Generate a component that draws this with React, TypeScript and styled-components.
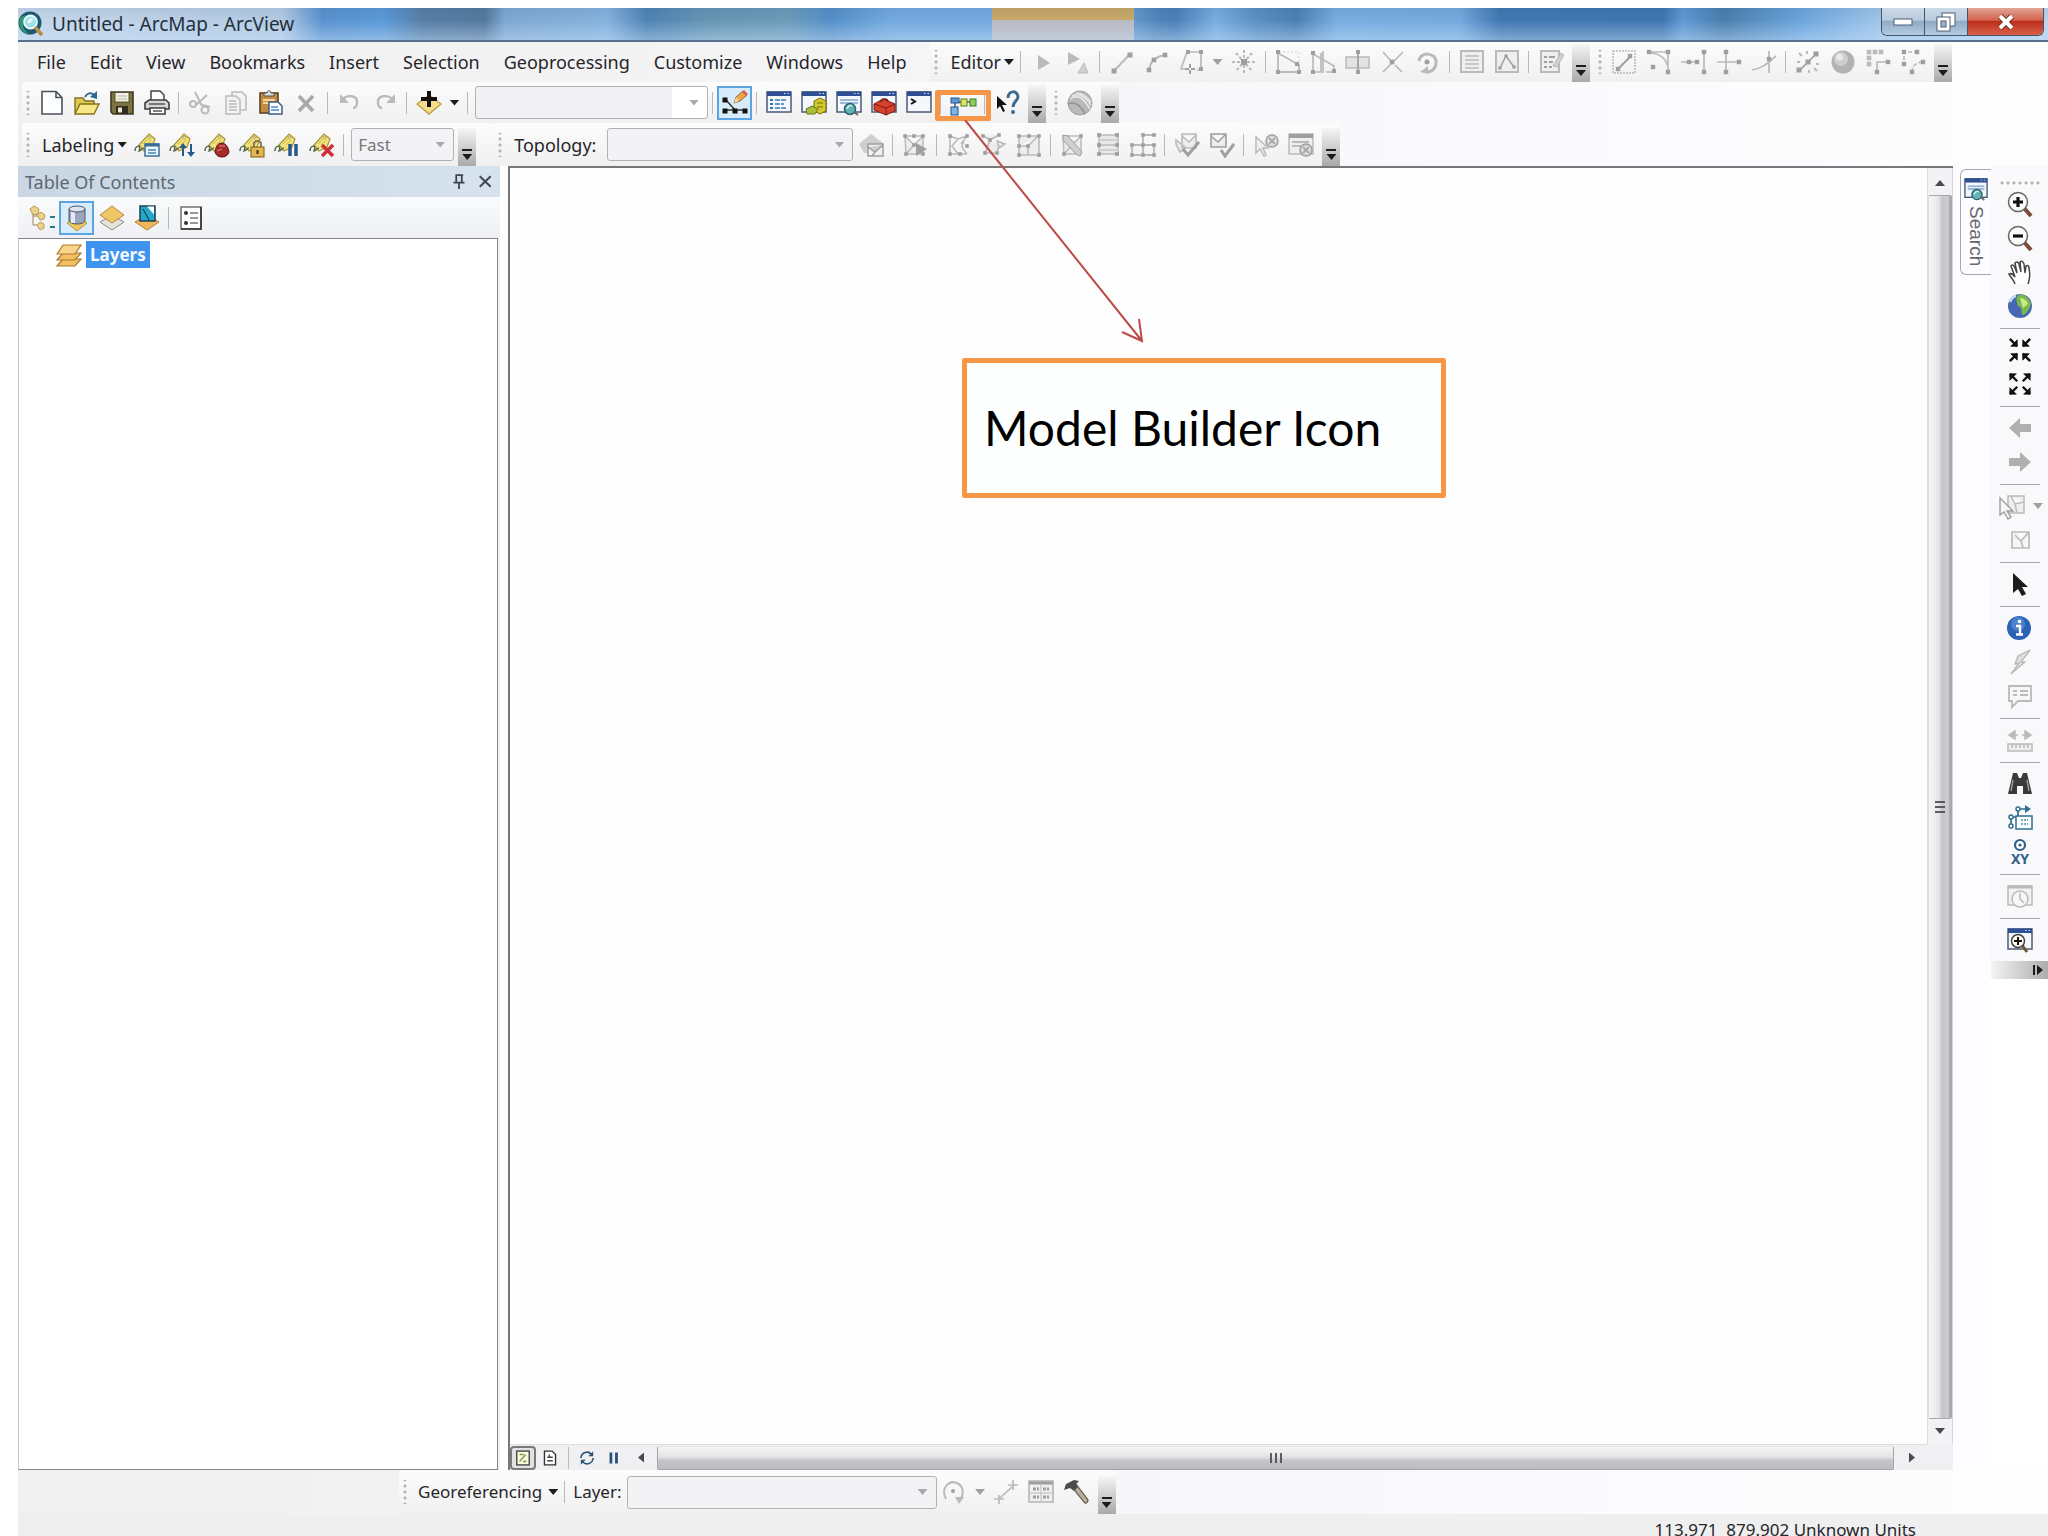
import React from 'react';
import styled, { createGlobalStyle, css } from 'styled-components';

const GlobalStyle = createGlobalStyle`
  *, *::before, *::after { box-sizing: border-box; }
  html, body { margin: 0; padding: 0; background: #ffffff; }
  body, button, select, input { font-family: 'Noto Sans', 'Open Sans', sans-serif; }
`;

/* ---------- icon drawings, all on a 26 x 26 grid ---------- */

const G = '#bababa';
const D = '#9f9f9f';

const dots = (pts: number[][], fill = D, r = 2) =>
  pts.map(([x, y], i) => <rect key={i} x={x - r} y={y - r} width={r * 2} height={r * 2} fill={fill} />);

const windowFrame = (
  <>
    <rect x="1" y="2" width="24" height="20" fill="#f4f8fc" stroke="#4a5a74" strokeWidth="1.5" />
    <rect x="1" y="1.5" width="24" height="4.5" fill="#2f4f94" />
    <path d="M18 3.5h1.5M21.500 3.500h1.500" stroke="#cfe0ff" />
  </>
);

const labelTag = (
  <>
    <path d="M5 13 15 2l6 5-3 8-8 4z" fill="#f1e27c" stroke="#a8973a" strokeWidth="1.2" />
    <circle cx="15.500" cy="5.500" r="1.200" fill="#fff" stroke="#8a7a2c" strokeWidth=".7" />
    <path d="M1 19c0-3 2-5 4-5 1 0 1 3 0 5 2 0 3-3 5-3" fill="none" stroke="#5b6b4a" strokeWidth="1.600" />
    <path d="M9 12l6-6M12 13l5-5" stroke="#cbb84c" />
  </>
);

const polyMesh = <path d="M3 4h18v18H4zM3 4l9 9 9-9M12 13l-8 9" fill="#ededed" stroke={G} strokeWidth="1.500" />;
const meshDots = dots([[3, 4], [12, 4], [21, 4], [4, 22], [21, 22], [12, 13]], D, 1.800);

const arrowHead = (x: number, y: number, dx: number, dy: number) => (
  <g key={`${x}-${y}`} fill="#111" stroke="#111">
    <path d={`M${x} ${y}v${dy * 7}l${dx * 7} ${-dy * 7}z`} strokeWidth=".8" />
    <path d={`M${x} ${y}l${dx * 8} ${dy * 8}`} strokeWidth="2.600" />
  </g>
);

const icons: Record<string, React.ReactNode> = {
  app: (
    <>
      <circle cx="12" cy="12" r="11.500" fill="#1d5a72" />
      <path d="M3 6a12 12 0 0 0 0 12 11 11 0 0 0 8 5C4 18 3 12 8 4z" fill="#2f9a6c" />
      <circle cx="12.500" cy="11" r="6.500" fill="#9fe0ee" stroke="#eafcff" strokeWidth="1.800" />
      <path d="M9 12c1-4 3-5 6-5-1 4-2 6-6 5z" fill="#fff" opacity=".7" />
      <path d="M17 16l7 8" stroke="#b98a4c" strokeWidth="3.500" />
    </>
  ),
  newDoc: <path d="M3 1.500h14l6 6V24H3zM17 1.500v6h6" fill="#fbfdff" stroke="#4b525c" strokeWidth="1.600" />,
  open: (
    <>
      <path d="M1 23V8h8l2 3h9v4" fill="#e2c84f" stroke="#84711d" strokeWidth="1.400" />
      <path d="M1 24l5-10h19l-5 10z" fill="#f8e887" stroke="#84711d" strokeWidth="1.400" />
      <path d="M11 7c2-4 6-5 9-2" fill="none" stroke="#2b6a8e" strokeWidth="2" />
      <path d="M23 1v8l-7-2z" fill="#2b6a8e" />
    </>
  ),
  save: (
    <>
      <path d="M2 2h22v22H4l-2-2z" fill="#7d7240" stroke="#3d3a24" strokeWidth="1.600" />
      <rect x="6" y="2.500" width="14" height="9.500" fill="#f4f3ea" stroke="#55502d" />
      <path d="M8 6h10M8 9h10" stroke="#b9b59a" />
      <rect x="7" y="16" width="12" height="8" fill="#2f2d22" />
      <rect x="9" y="17.500" width="4" height="5" fill="#e9e7dc" />
    </>
  ),
  print: (
    <>
      <path d="M7 11V1h9l4 4v6" fill="#fff" stroke="#444" strokeWidth="1.500" />
      <path d="M1 19v-6l4-3h17l3 3v6z" fill="#d6d6d6" stroke="#3d3d3d" strokeWidth="1.600" />
      <path d="M5 14h16" stroke="#555" strokeWidth="1.500" />
      <path d="M6 18h15v6H6z" fill="#fff" stroke="#3d3d3d" strokeWidth="1.500" />
      <path d="M9 21h9" stroke="#555" strokeWidth="1.500" />
    </>
  ),
  cut: (
    <g fill="none" stroke={G} strokeWidth="2">
      <path d="M7 2l7 14M19 5 8 15" />
      <circle cx="17" cy="20" r="3.500" />
      <circle cx="5" cy="14" r="3" />
      <path d="M14 15l8 2" />
    </g>
  ),
  copy: (
    <g fill="#f3f3f3" stroke={G} strokeWidth="1.500">
      <path d="M9 2h10l4 4v14H9z" />
      <path d="M3 6h10l4 4v14H3z" />
      <path d="M6 11h7M6 14h8M6 17h8M6 20h8" />
    </g>
  ),
  paste: (
    <>
      <rect x="2" y="3" width="18" height="20" fill="#c58a42" stroke="#5c4424" strokeWidth="1.600" />
      <path d="M6 6V3h3c0-3 4-3 4 0h3v3z" fill="#dcdcdc" stroke="#555" />
      <path d="M5 10h12M5 13h8" stroke="#f5d49a" strokeWidth="2" />
      <path d="M11 12h9l4 4v8H11z" fill="#fff" stroke="#3b5d86" strokeWidth="1.500" />
      <path d="M13 17h7M13 20h8" stroke="#4a86c5" strokeWidth="1.500" />
    </>
  ),
  del: <path d="M6 6l14 15M20 6 6 21" stroke="#a9a9a9" strokeWidth="3.600" />,
  undo: (
    <g fill="none" stroke={G} strokeWidth="2.400">
      <path d="M5 10c5-6 16-5 15 3 0 3-2 5-4 5" />
      <path d="M3 4v9h9z" fill={G} stroke="none" />
    </g>
  ),
  redo: (
    <g fill="none" stroke={G} strokeWidth="2.400">
      <path d="M21 10C16 4 5 5 6 13c0 3 2 5 4 5" />
      <path d="M23 4v9h-9z" fill={G} stroke="none" />
    </g>
  ),
  add: (
    <>
      <path d="M1 14 13 5l12 9-12 10z" fill="#f4dc8a" stroke="#c2a04c" strokeWidth="1.400" />
      <path d="M13 1v16M5 9h16" stroke="#111" strokeWidth="4" />
    </>
  ),
  sketch: (
    <>
      <path d="M4 10l9 10 9 0M4 20h9" stroke="#333" strokeWidth="1.500" fill="none" />
      {dots([[3, 10], [3, 21], [13, 21], [23, 21]], '#111', 2.500)}
      <path d="M12 13l2-6 7-6 4 4-7 6z" fill="#eca64c" stroke="#8a6a3a" />
      <path d="M12 13l2-6 3 4z" fill="#f4dcb4" />
      <path d="M20 2l2-2 4 4-2 2z" fill="#d2605c" />
    </>
  ),
  winTable: (
    <>
      {windowFrame}
      <path d="M4 10h3M4 14h3M4 18h3" stroke="#2f7ab0" strokeWidth="2" />
      <path d="M9 10h12M9 14h9M9 18h12" stroke="#3d78a8" strokeWidth="1.600" strokeDasharray="5 1" />
    </>
  ),
  winCatalog: (
    <>
      {windowFrame}
      <path d="M13 11l6-3 6 3v10l-6 3-6-3z" fill="#d3c82c" stroke="#756e10" />
      <path d="M5 19l6-3 6 3-3 5H6z" fill="#a8c03a" stroke="#66761c" />
      <path d="M16 13l6 0M16 17h6" stroke="#756e10" />
    </>
  ),
  winSearch: (
    <>
      {windowFrame}
      <path d="M4 10h18M4 13h18" stroke="#9db8d8" strokeWidth="2" />
      <circle cx="14" cy="19" r="5.500" fill="#63b4b4" stroke="#2d6474" strokeWidth="1.500" />
      <path d="M11 19c1-3 3-4 5-3" stroke="#c9f2e8" strokeWidth="1.500" fill="none" />
      <path d="M18 22l4 3" stroke="#6b6b6b" strokeWidth="2" />
    </>
  ),
  winToolbox: (
    <>
      {windowFrame}
      <path d="M3 14l9-5 12 5v7l-9 4-12-5z" fill="#d5402f" stroke="#7c1c14" />
      <path d="M3 14l12 4 9-4M15 18v7" stroke="#7c1c14" fill="none" />
      <path d="M10 12c0-4 7-4 7 0" stroke="#7c1c14" strokeWidth="1.500" fill="none" />
    </>
  ),
  winPython: (
    <>
      {windowFrame}
      <path d="M5 9l4 2.500-4 2.500" stroke="#111" strokeWidth="2" fill="none" />
    </>
  ),
  model: (
    <>
      <path d="M5 11v7M7 12h17" stroke="#556" strokeWidth="1.500" fill="none" />
      <rect x="1" y="8" width="8" height="5" fill="#5d9bd8" stroke="#24558c" />
      <rect x="1" y="17" width="7" height="8" fill="#7db5e6" stroke="#24558c" />
      <rect x="11" y="9" width="6" height="7" fill="#e2e65c" stroke="#5a7a20" />
      <rect x="20" y="9" width="6" height="7" fill="#8ccf58" stroke="#3e7a20" />
    </>
  ),
  help: (
    <>
      <path d="M3 6v13l3-3 3 6 2-1-3-6h5z" fill="#111" />
      <path d="M14 8c0-8 10-8 10-1 0 4-5 4-5 10" fill="none" stroke="#3c6a8e" strokeWidth="3" />
      <circle cx="19" cy="22" r="2" fill="#3c6a8e" />
    </>
  ),
  globeGray: (
    <>
      <circle cx="13" cy="13" r="12" fill="#b9b9b9" stroke="#a2a2a2" />
      <path d="M3 9c8-6 14 0 20 10M5 6c8-4 14 2 19 9M9 3c6 0 11 4 15 9" stroke="#e9e9e9" strokeWidth="1.500" fill="none" />
      <path d="M1 14c7-3 13 2 17 10" stroke="#8f8f8f" strokeWidth="1.500" fill="none" />
    </>
  ),
  play: <path d="M8 6l12 8-12 7z" fill={G} />,
  playA: (
    <>
      <path d="M3 3l12 7-12 6z" fill={G} />
      <path d="M13 24l6-10 4 10z" fill="#cfcfcf" stroke={G} />
    </>
  ),
  line: (
    <>
      <path d="M5 22 21 5" stroke={G} strokeWidth="2" />
      {dots([[5, 22], [21, 6]], D, 2.500)}
    </>
  ),
  arc: (
    <>
      <path d="M5 22C6 12 11 8 21 6" stroke={G} strokeWidth="2" fill="none" />
      {dots([[5, 21], [10, 11], [21, 6]], D, 2.300)}
    </>
  ),
  trace: (
    <>
      <path d="M8 20H2L8 3h14v18h-4" stroke={G} strokeWidth="1.700" fill="none" />
      <path d="M11 15v10M6 20h10" stroke={D} strokeWidth="2" strokeDasharray="4 2" />
      {dots([[9, 3], [22, 3], [22, 20]], D, 2)}
    </>
  ),
  spark: (
    <g stroke={G} strokeWidth="2" strokeDasharray="3 2">
      <path d="M13 1v24M1 13h24M5 4l16 18M21 4 5 22" />
      <rect x="10" y="10" width="6" height="6" fill={D} stroke="none" />
    </g>
  ),
  ed1: (
    <>
      <path d="M3 3v20h21v-7L3 4" stroke={G} strokeWidth="1.800" fill="none" />
      <path d="M4 3h20v12" stroke="#cdcdcd" strokeDasharray="2 2" fill="none" />
      {dots([[3, 3], [3, 23], [24, 23], [22, 15]], D, 2)}
    </>
  ),
  ed2: (
    <>
      <path d="M3 4v19h8V4M13 2v22M3 5l9 5 12 7v6h-8" stroke={G} strokeWidth="1.700" fill="none" />
      {dots([[3, 4], [3, 23], [24, 22]], D, 2)}
    </>
  ),
  ed3: (
    <>
      <rect x="1" y="8" width="23" height="11" fill="#e3e3e3" stroke={G} strokeWidth="1.500" />
      <path d="M13 2v23" stroke={D} strokeWidth="1.700" />
      {dots([[13, 3], [13, 23]], D, 2)}
    </>
  ),
  ed4: (
    <>
      <path d="M3 23 23 3M3 3l9 10M15 16l7 7" stroke={G} strokeWidth="1.700" />
      {dots([[12, 13]], D, 2.300)}
    </>
  ),
  ed5: (
    <>
      <path d="M4 12C5 2 22 3 21 14c0 6-5 9-9 9" stroke={G} strokeWidth="3" fill="none" />
      <path d="M5 23l8-6v8z" fill={G} />
      <circle cx="12" cy="13" r="2.500" fill={D} />
    </>
  ),
  sheet: (
    <>
      <rect x="2" y="2" width="22" height="21" fill="#efefef" stroke={G} strokeWidth="2" />
      <path d="M6 7h14M6 11h14M6 15h14M6 19h14" stroke={G} strokeWidth="1.400" />
    </>
  ),
  chart: (
    <>
      <rect x="2" y="2" width="22" height="21" fill="#efefef" stroke={G} strokeWidth="2" />
      <path d="M6 19 12 7l8 11" stroke={D} strokeWidth="1.500" fill="none" />
      {dots([[6, 19], [12, 7], [20, 18]], D, 1.600)}
    </>
  ),
  form: (
    <>
      <path d="M3 2h18v21H3z" fill="#efefef" stroke={G} strokeWidth="2" />
      <path d="M6 8h3M6 13h3M6 18h3M11 8h6M11 13h4M11 18h3" stroke={D} strokeWidth="2" />
      <path d="M15 17l8-13 3 2-7 12z" fill="#d0d0d0" stroke={G} />
    </>
  ),
  sn1: (
    <>
      <rect x="2" y="2" width="22" height="22" fill="none" stroke={G} strokeWidth="1.500" strokeDasharray="2 1" />
      <path d="M7 20 20 7" stroke={D} strokeWidth="2" />
      {dots([[7, 20], [19, 7]], D, 2.200)}
    </>
  ),
  sn2: (
    <>
      <path d="M3 3h19v20M4 4c8 0 16 5 17 12" stroke={G} strokeWidth="1.700" fill="none" />
      {dots([[3, 3], [22, 3], [22, 23], [7, 18]], D, 2.200)}
    </>
  ),
  sn3: (
    <>
      <path d="M23 3v20M0 13h18" stroke={G} strokeWidth="1.700" />
      {dots([[23, 3], [23, 23], [8, 13], [16, 13]], D, 2.200)}
    </>
  ),
  sn4: (
    <>
      <path d="M10 3v20M1 13h23" stroke={G} strokeWidth="1.700" />
      {dots([[10, 3], [10, 23], [23, 13]], D, 2.200)}
    </>
  ),
  sn5: (
    <>
      <path d="M1 21C10 20 16 15 25 7M18 2v22" stroke={G} strokeWidth="1.700" fill="none" />
      {dots([[18, 10]], D, 2.200)}
    </>
  ),
  sn6: (
    <>
      <path d="M4 22 22 4" stroke={D} strokeWidth="1.700" />
      <path d="M2 13h3M21 15h3M12 2v3M14 21v3M4 4l3 3M19 19l3 3" stroke={G} strokeWidth="2" />
      {dots([[4, 21], [13, 13], [21, 5]], D, 2.500)}
    </>
  ),
  sphere: (
    <>
      <circle cx="13" cy="13" r="11.500" fill="#b2b2b2" />
      <circle cx="11" cy="10" r="7" fill="#cdcdcd" />
      <circle cx="9.500" cy="8" r="3.500" fill="#e9e9e9" />
    </>
  ),
  sn7: (
    <>
      {dots([[4, 3], [10, 3], [16, 3], [4, 9], [4, 15]], G, 2.300)}
      <path d="M12 23V13h12" stroke={G} strokeWidth="1.700" fill="none" />
      {dots([[12, 23], [23, 13]], D, 2.200)}
    </>
  ),
  sn8: (
    <>
      <path d="M4 17V3h14M12 23c0-7 5-10 12-10" stroke={G} strokeWidth="1.700" strokeDasharray="4 2" fill="none" />
      {dots([[4, 3], [17, 3], [4, 15], [12, 23], [23, 13]], D, 2.200)}
    </>
  ),
  lab1: (
    <>
      {labelTag}
      <rect x="11" y="12" width="14" height="12" fill="#eef6fc" stroke="#3b6c98" strokeWidth="1.500" />
      <path d="M11 13h14" stroke="#3b6c98" strokeWidth="3" />
      <path d="M14 18h8M14 21h8" stroke="#3b8ac0" strokeWidth="1.500" />
    </>
  ),
  lab2: (
    <>
      {labelTag}
      <path d="M14 24V13M22 12v11" stroke="#27598a" strokeWidth="2" />
      <path d="M10 16l4-5 4 5zM18 20l4 5 4-5z" fill="#27598a" />
    </>
  ),
  lab3: (
    <>
      {labelTag}
      <path d="M11 20c1-7 4-9 7-9s6 3 7 9c-1 3-3 5-7 5s-6-2-7-5z" fill="#a52b2b" stroke="#5e1212" />
      <path d="M15 14h6M13 19l5-2" stroke="#e08a8a" />
    </>
  ),
  lab4: (
    <>
      {labelTag}
      <path d="M15 16v-4c0-4 7-4 7 0v4" fill="none" stroke="#8a7a54" strokeWidth="2" />
      <rect x="12" y="15" width="13" height="10" fill="#e0b750" stroke="#7a5c1c" />
      <path d="M18.500 18v4" stroke="#443310" strokeWidth="2" />
    </>
  ),
  lab5: (
    <>
      {labelTag}
      <path d="M16 12v12M22 12v12" stroke="#27598a" strokeWidth="3.500" />
    </>
  ),
  lab6: (
    <>
      {labelTag}
      <path d="M13 13l11 11M24 13 13 24" stroke="#cf2f38" strokeWidth="3.500" />
    </>
  ),
  tp1: (
    <>
      <path d="M1 12 13 2l12 9-3 10H6z" fill="#cfcfcf" />
      <path d="M10 12h15v12H10zM10 15l7 5 8-7M14 24l3-4" fill="#f2f2f2" stroke={D} strokeWidth="1.500" />
    </>
  ),
  tp2: (
    <>
      {polyMesh}
      {meshDots}
      <path d="M14 11l11 6-11 7z" fill={D} />
    </>
  ),
  tp3: (
    <>
      <path d="M4 4v18h17M4 4l8 3 9-3M12 7l-6 7 6 8M15 12l6-8M18 10c-4 4-1 7 3 12" fill="none" stroke={G} strokeWidth="1.600" />
      {dots([[4, 4], [21, 4], [4, 22], [14, 22], [21, 14]], D, 1.800)}
    </>
  ),
  tp4: (
    <>
      <path d="M2 4l7 4 9-5M9 8 4 21h12l2-8M16 9l8 3-6 4z" fill="#ececec" stroke={G} strokeWidth="1.600" />
      {dots([[2, 4], [18, 3], [4, 21], [16, 21], [9, 8]], D, 1.800)}
    </>
  ),
  tp5: (
    <>
      <path d="M3 4h20v19H3zM3 14h9l9-9M12 14v9" fill="#ededed" stroke={G} strokeWidth="1.600" />
      {dots([[3, 4], [13, 4], [23, 4], [3, 23], [23, 23], [12, 14], [3, 14]], D, 1.800)}
    </>
  ),
  tp6: (
    <>
      {polyMesh}
      <path d="M3 3l5 1 14 16-2 4-4-2L3 8z" fill="#cfcfcf" stroke={D} />
      {dots([[21, 4], [4, 22]], D, 1.800)}
    </>
  ),
  tp7: (
    <>
      <path d="M4 3h19v19H4zM4 13h19" fill="#e8e8e8" stroke={G} strokeWidth="1.600" />
      <path d="M3 8h20M3 18h20" stroke="#cfcfcf" strokeWidth="2" />
      {dots([[4, 3], [22, 3], [4, 13], [22, 13], [4, 22], [22, 22]], D, 1.900)}
    </>
  ),
  tp8: (
    <>
      <path d="M13 23V3h11M2 13h22v10H2zM2 13v10" fill="none" stroke={G} strokeWidth="1.800" />
      {dots([[13, 3], [24, 3], [2, 13], [13, 13], [24, 13], [2, 23], [13, 23], [24, 23]], D, 1.800)}
    </>
  ),
  tp9: (
    <>
      <path d="M8 2h14v14H8zM8 4l7 6 7-7M2 8l10 8-6 4-4-8z" fill="#ededed" stroke={G} strokeWidth="1.600" />
      <path d="M9 17l5 6L25 10" stroke={D} strokeWidth="3" fill="none" />
    </>
  ),
  tp10: (
    <>
      <path d="M2 2h15v13H2zM2 4l7 6 7-7" fill="#ededed" stroke={D} strokeWidth="1.600" />
      <path d="M12 18l4 6 9-12" stroke={D} strokeWidth="3" fill="none" />
    </>
  ),
  tp11: (
    <>
      <path d="M3 5v16l4-4 4 7 2-1-3-7h5z" fill="#f0f0f0" stroke={G} strokeWidth="1.500" />
      <circle cx="19" cy="9" r="6" fill="#dcdcdc" stroke={D} strokeWidth="1.500" />
      <path d="M16 6l6 6M22 6l-6 6" stroke={D} strokeWidth="1.500" />
    </>
  ),
  tp12: (
    <>
      <rect x="1" y="2" width="24" height="20" fill="#efefef" stroke={G} strokeWidth="1.500" />
      <path d="M1 4h24" stroke={D} strokeWidth="4" />
      <path d="M4 10h17M4 14h9" stroke={G} strokeWidth="2" />
      <circle cx="18" cy="18" r="6" fill="#d8d8d8" stroke={D} strokeWidth="1.500" />
      <path d="M15 15l6 6M21 15l-6 6" stroke={D} strokeWidth="1.500" />
    </>
  ),
  tocTree: (
    <>
      <path d="M4 8v12h6M4 11h5" stroke="#9a8a60" fill="none" />
      <path d="M1 4l4-3 5 3-1 5-5 1zM8 10l4-3 4 3-1 4-4 1zM8 20l3-3 4 2v4l-4 2z" fill="#ecd08c" stroke="#b79a58" />
      <path d="M21 12h5M21 22h5" stroke="#2c7a8c" strokeWidth="2" />
    </>
  ),
  tocSource: (
    <>
      <path d="M3 18l10-6 10 6-10 8z" fill="#edc65c" stroke="#b8933a" />
      <path d="M5 4v12c2 4 14 4 16 0V4z" fill="#9aa6bd" stroke="#4c566c" />
      <path d="M9 6v12" stroke="#e4e9f4" strokeWidth="4" />
      <ellipse cx="13" cy="4" rx="8" ry="3" fill="#dde2ec" stroke="#4c566c" />
    </>
  ),
  tocVisible: (
    <>
      <path d="M1 17l12-7 12 7-12 8z" fill="#e8e4dc" stroke="#8c877c" />
      <path d="M1 10 13 1l12 9-12 8z" fill="#f0c468" stroke="#b8893a" />
    </>
  ),
  tocSelect: (
    <>
      <path d="M1 17l12-7 12 7-12 8z" fill="#efb65c" stroke="#b97f32" />
      <rect x="6" y="1" width="15" height="15" fill="#25a7c8" stroke="#1c3f56" strokeWidth="1.500" />
      <path d="M13 1.500h7v8z" fill="#fff" />
      <path d="M9 4l6 11" stroke="#123" />
    </>
  ),
  tocOptions: (
    <>
      <rect x="3" y="2" width="20" height="22" fill="#fff" stroke="#666" strokeWidth="1.400" />
      <path d="M23 2v22H3" fill="none" stroke="#333" strokeWidth="1.600" />
      <circle cx="8" cy="8" r="2" fill="#333" />
      <circle cx="8" cy="18" r="2" fill="#333" />
      <path d="M12 8h8M12 13h8M12 18h8" stroke="#777" strokeWidth="1.600" />
    </>
  ),
  layers: (
    <g fill="#f2bf62" stroke="#a97a2e" strokeWidth="1.200">
      <path d="M1 24l6-7h18l-6 7z" />
      <path d="M1 18l6-7h18l-6 7z" />
      <path d="M1 12l6-9h18l-6 9z" fill="#f9d58c" />
    </g>
  ),
  zoomIn: (
    <>
      <path d="M17 17l7 8" stroke="#7b4b34" strokeWidth="4" />
      <circle cx="11" cy="11" r="9.500" fill="#fafafa" stroke="#666" strokeWidth="1.500" />
      <path d="M11 6v10M6 11h10" stroke="#111" strokeWidth="3.200" />
    </>
  ),
  zoomOut: (
    <>
      <path d="M17 17l7 8" stroke="#7b4b34" strokeWidth="4" />
      <circle cx="11" cy="11" r="9.500" fill="#fafafa" stroke="#666" strokeWidth="1.500" />
      <path d="M6 11h10" stroke="#111" strokeWidth="3.200" />
    </>
  ),
  hand: (
    <path
      d="M8 25c-1-4-5-7-6-10 2-1 4 0 6 3L4 7c1-2 3-1 4 2l2 5L8 4c1-2 3-1 4 1l2 8-1-10c2-2 3 0 4 2l1 9 1-7c2-1 3 0 3 2 1 5 1 11-1 16"
      fill="#fff"
      stroke="#444"
      strokeWidth="1.500"
    />
  ),
  globe: (
    <>
      <circle cx="13" cy="13" r="12" fill="#4668b4" />
      <path d="M11 2c6-2 12 4 13 9-2 6-5 11-9 11-1-5 1-7-4-9-2-5-2-8 0-11z" fill="#79b84c" />
      <path d="M13 5c4 0 7 3 8 6l-5 4z" fill="#cfe88c" />
      <path d="M3 9c1-3 4-6 6-6" stroke="#c5d8f8" strokeWidth="2.500" fill="none" />
    </>
  ),
  shrink: <>{[arrowHead(10, 9, -1, -1), arrowHead(16, 9, 1, -1), arrowHead(10, 17, -1, 1), arrowHead(16, 17, 1, 1)]}</>,
  grow: <>{[arrowHead(2, 2, 1, 1), arrowHead(24, 2, -1, 1), arrowHead(2, 24, 1, -1), arrowHead(24, 24, -1, -1)]}</>,
  back: <path d="M2 13 13 3v6h11v8H13v6z" fill="#b0b0b0" />,
  forward: <path d="M24 13 13 3v6H2v8h11v6z" fill="#b0b0b0" />,
  selFeat: (
    <>
      <path d="M9 3h16v17H9zM12 3l4 8 9-2M16 11l2 9" fill="#efefef" stroke={G} strokeWidth="1.500" />
      <path d="M1 5v17l4-3 4 7 3-2-4-6h6z" fill="#f6f6f6" stroke={D} strokeWidth="1.400" />
    </>
  ),
  clearSel: <path d="M5 5h17v16H5zM8 8l6 6 7-8M14 14l2 6" fill="#f5f5f5" stroke={G} strokeWidth="1.700" />,
  cursor: <path d="M6 2v20l5-4 4 7 4-2-4-7h6z" fill="#1c1c1c" />,
  info: (
    <>
      <circle cx="12" cy="13" r="12" fill="#2b62b4" />
      <circle cx="11" cy="9" r="7" fill="#5a90d8" opacity=".7" />
      <path d="M9 11h4v8M9 19.500h7" stroke="#fff" strokeWidth="2.400" fill="none" />
      <circle cx="12.500" cy="6.500" r="1.800" fill="#fff" />
    </>
  ),
  flash: <path d="M23 1 11 7l-3 8 4-1-8 11L18 13l-4 0z" fill="#dedede" stroke={G} strokeWidth="1.300" />,
  popup: (
    <>
      <path d="M2 3h22v15H11l-6 6v-6H2z" fill="#f7f7f7" stroke={G} strokeWidth="1.800" />
      <path d="M6 8h4M6 12h4M13 8h8M13 12h8" stroke={G} strokeWidth="2" />
    </>
  ),
  measure: (
    <>
      <path d="M2 8l6-4v8zM24 8l-6-4v8zM8 8h3M15 8h3" fill={G} stroke={G} strokeWidth="1.500" />
      <path d="M1 17h24v7H1zM5 17v4M9 17v4M13 17v4M17 17v4M21 17v4" fill="#eee" stroke={G} strokeWidth="1.500" />
    </>
  ),
  binoc: (
    <>
      <path d="M6 2h4l2 5h2l2-5h4l5 21h-9v-8h-6v8H1z" fill="#3a3a3a" />
      <path d="M6 9l-2 11M20 9l2 11" stroke="#9a9a9a" strokeWidth="1.500" />
    </>
  ),
  route: (
    <>
      <path d="M4 21v-9h7V4h8" stroke="#2f6f8e" strokeWidth="1.700" fill="none" />
      <path d="M18 0l6 4-6 4z" fill="#2f6f8e" />
      <g fill="#fff" stroke="#2f6f8e" strokeWidth="1.500">
        <circle cx="4" cy="21" r="2" />
        <circle cx="4" cy="12" r="2" />
        <circle cx="11" cy="4" r="2" />
        <rect x="9" y="11" width="16" height="13" />
      </g>
      <path d="M14 15h7M14 19h7" stroke="#4a90a8" strokeWidth="1.500" strokeDasharray="2 1" />
    </>
  ),
  target: (
    <>
      <circle cx="13" cy="6" r="5" fill="#fff" stroke="#2d5f88" strokeWidth="2.200" />
      <circle cx="13" cy="6" r="1.600" fill="#2d5f88" />
      <text x="13" y="25" textAnchor="middle" fontSize="14" fontWeight="700" fill="#2d5f88">XY</text>
    </>
  ),
  time: (
    <>
      <rect x="1" y="3" width="24" height="19" fill="#f2f2f2" stroke={G} strokeWidth="1.500" />
      <path d="M1 4h24" stroke={G} strokeWidth="3" />
      <circle cx="13" cy="16" r="8" fill="#f7f7f7" stroke={G} strokeWidth="1.500" />
      <path d="M13 10v6l4 4" stroke={G} strokeWidth="1.500" fill="none" />
    </>
  ),
  viewer: (
    <>
      {windowFrame}
      <path d="M15 18l5 7" stroke="#6a5a30" strokeWidth="3" />
      <circle cx="11" cy="14" r="6.500" fill="#fffef0" stroke="#444" strokeWidth="1.500" />
      <path d="M11 10v8M7 14h8" stroke="#111" strokeWidth="2" />
    </>
  ),
  rotate: (
    <>
      <path d="M5 20C-1 8 9 1 16 4c7 3 7 12 3 17" stroke={G} strokeWidth="2" fill="none" />
      <path d="M14 18l9 0-5 7z" fill={G} />
      <circle cx="12" cy="12" r="2" fill={D} />
    </>
  ),
  control: (
    <>
      <path d="M6 20 20 7" stroke={G} strokeWidth="1.700" />
      <path d="M20 1v10M15 6h10M6 16v9M1 20h10" stroke={G} strokeWidth="1.700" />
    </>
  ),
  linkTable: (
    <>
      <rect x="1" y="2" width="24" height="21" fill="#efefef" stroke={G} strokeWidth="1.700" />
      <path d="M1 4h24" stroke={D} strokeWidth="3" />
      <path d="M5 10h6M5 18h6M15 10h6M15 18h6" stroke={D} strokeWidth="3" strokeDasharray="3 1" />
      <path d="M13 6v16M2 14h22" stroke={G} />
    </>
  ),
  hammer: (
    <>
      <path d="M9 8l4-3 12 16c0 3-3 4-4 2z" fill="#b8b09a" stroke="#5c5648" strokeWidth="1.200" />
      <path d="M1 11l2-6 8-4 5 1-3 3 2 3-4 4-4-3z" fill="#4c4c4c" />
    </>
  ),
  dataView: (
    <>
      <rect x="4" y="3" width="18" height="20" fill="#fdfbe0" stroke="#444" strokeWidth="2" />
      <path d="M8 18l9-10M8 8h6M13 18h5" stroke="#7a9a4a" strokeWidth="2" />
    </>
  ),
  layoutView: (
    <>
      <path d="M5 3h11l5 5v15H5z" fill="#fff" stroke="#333" strokeWidth="2" />
      <path d="M9 12h8M9 17h8M12 8v4" stroke="#444" strokeWidth="2" />
    </>
  ),
  refresh: (
    <g fill="none" stroke="#2a5478" strokeWidth="2.600">
      <path d="M3 13C4 3 15 1 20 7M23 13c-1 10-12 12-17 6" />
      <path d="M23 2v8h-8zM3 24v-8h8z" fill="#2a5478" stroke="none" />
    </g>
  ),
  pause: <path d="M8 4v18M17 4v18" stroke="#27507a" strokeWidth="4.500" />,
  pin: <path d="M8 3h11M9 3v11M17 3v11M5 14h16M13 14v9" fill="none" stroke="#3c4650" strokeWidth="2.600" />,
  close: <path d="M3 4l19 18M22 4 3 22" stroke="#3c4650" strokeWidth="3.400" />,
};

const Svg = styled.svg<{ $size: number }>`
  display: block;
  flex: none;
  width: ${(p) => p.$size}px;
  height: ${(p) => p.$size}px;
  overflow: visible;
`;

const Icon = ({ name, size = 26 }: { name: string; size?: number }) => (
  <Svg $size={size} viewBox="0 0 26 26" aria-hidden="true">{icons[name]}</Svg>
);

const Triangle = styled.span<{ $dir?: 'up' | 'down' | 'left' | 'right'; $color?: string }>`
  flex: none;
  width: 10px;
  height: 6px;
  background: ${(p) => p.$color || '#1c1c1c'};
  clip-path: polygon(0 0, 100% 0, 50% 100%);
  ${(p) => p.$dir === 'up' && css`clip-path: polygon(0 100%, 50% 0, 100% 100%);`}
  ${(p) => p.$dir === 'left' && css`width: 6px; height: 10px; clip-path: polygon(100% 0, 100% 100%, 0 50%);`}
  ${(p) => p.$dir === 'right' && css`width: 6px; height: 10px; clip-path: polygon(0 0, 100% 50%, 0 100%);`}
`;

/* ---------- shared controls ---------- */

const bareButton = css`
  appearance: none;
  margin: 0;
  padding: 0;
  border: 0;
  background: none;
  color: inherit;
  font-size: 18px;
  cursor: default;
`;

const ToolButton = styled.button<{ $on?: boolean }>`
  ${bareButton}
  position: relative;
  flex: none;
  display: flex;
  align-items: center;
  justify-content: center;
  width: 35px;
  height: 34px;
  ${(p) => p.$on && css`
    background: #d8ecfb;
    border: 2px solid #5ba4e2;
  `}
`;

const DropArrowButton = styled.button`
  ${bareButton}
  flex: none;
  display: flex;
  align-items: center;
  justify-content: center;
  width: 17px;
  height: 34px;
`;

const TextMenuButton = styled.button<{ $compact?: boolean }>`
  ${bareButton}
  display: flex;
  align-items: center;
  gap: 3px;
  padding: 0 2px 0 8px;
  line-height: 24px;
  ${(p) => p.$compact && css`
    gap: 6px;
    padding-left: 7px;
    font-size: 17px;
  `}
`;

const Separator = styled.span`
  flex: none;
  width: 9px;
  height: 22px;
  background: linear-gradient(#b9b9b9, #b9b9b9) center / 1px 100% no-repeat;
`;

const Grip = styled.span`
  flex: none;
  width: 12px;
  height: 24px;
  background: radial-gradient(circle at center, #b4b4b4 1px, transparent 2px) center / 6px 6px repeat-y;
`;

const OverflowButton = styled.button<{ $gap?: number }>`
  ${bareButton}
  flex: none;
  align-self: flex-end;
  display: flex;
  flex-direction: column;
  align-items: center;
  justify-content: flex-end;
  gap: 3px;
  width: 18px;
  height: 38px;
  margin: 0 ${(p) => p.$gap ?? 4}px 0 4px;
  padding-bottom: 6px;
  background: linear-gradient(#f6f6f6, #a9a9a9);
  &::before {
    content: '';
    width: 10px;
    height: 2px;
    background: #1c1c1c;
  }
`;

const SelectFrame = styled.span<{ $width: number; $white?: boolean }>`
  flex: none;
  display: grid;
  align-items: center;
  width: ${(p) => p.$width}px;
  height: 33px;
  margin-left: 3px;
  border: 1px solid #b2b2b6;
  border-radius: 3px;
  background: ${(p) => (p.$white ? 'linear-gradient(90deg, #f1f0f2 85%, #ffffff 85%)' : '#f3f2f4')};
  > * { grid-area: 1 / 1; }
  > span { justify-self: end; margin-right: 8px; }
`;

const SelectBox = styled.select`
  appearance: none;
  width: 100%;
  height: 100%;
  margin: 0;
  padding: 0 26px 0 6px;
  border: 0;
  background: transparent;
  color: #77777a;
  font-size: 17px;
  opacity: 1;
`;

const Combo = ({ id, label, width, value = '', white }: { id: string; label?: string; width: number; value?: string; white?: boolean }) => (
  <SelectFrame $width={width} $white={white}>
    <SelectBox id={id} aria-label={label} defaultValue={value}>
      <option value={value}>{value}</option>
    </SelectBox>
    <Triangle $color="#a9a9ac" />
  </SelectFrame>
);

const FieldLabel = styled.label<{ $compact?: boolean }>`
  padding: 0 8px;
  font-size: 18px;
  line-height: 24px;
  ${(p) => p.$compact && css`
    padding: 0 2px 0 4px;
    font-size: 17px;
  `}
`;

const Overflow = ({ gap }: { gap?: number }) => (
  <OverflowButton type="button" aria-label="Toolbar options" $gap={gap}>
    <Triangle />
  </OverflowButton>
);

/* '|' draws a divider, 'v' a small drop-down arrow, anything else an icon button */
const Tools = ({ items }: { items: string[] }) => (
  <>
    {items.map((item, i) => {
      if (item === '|') return <Separator key={i} />;
      if (item === 'v' || item === 'V') {
        return (
          <DropArrowButton key={i} type="button" aria-label="More choices">
            <Triangle $color={item === 'V' ? '#1c1c1c' : '#a0a0a0'} />
          </DropArrowButton>
        );
      }
      return (
        <ToolButton key={i} type="button" aria-label={item}>
          <Icon name={item} />
        </ToolButton>
      );
    })}
  </>
);

/* ---------- page ---------- */

const Page = styled.div`
  display: flex;
  flex-direction: column;
  height: 100vh;
  padding: 8px 0 0 18px;
  overflow: hidden;
  color: #26262a;
  background: #ffffff;
`;

const TitleBar = styled.header`
  flex: none;
  display: flex;
  align-items: center;
  height: 34px;
  border-bottom: 2px solid #55718e;
  background:
    linear-gradient(rgba(20, 50, 90, 0.08), rgba(255, 255, 255, 0) 40%, rgba(200, 225, 250, 0.45)),
    linear-gradient(90deg, transparent 48%, #c9a968 48%, #c9a968 55%, transparent 55%) top / 100% 12px no-repeat,
    linear-gradient(90deg, transparent 48%, #b9b9c2 48%, #b9b9c2 55%, transparent 55%),
    linear-gradient(90deg, #c6d8ea 0%, #b4cbe4 13%, #5a92cf 15%, #5b9ad8 18%, #587ea6 20%, #567a9e 23%, #7fa8d2 24%, #86b2de 29%, #4f84b4 31%, #6696b4 34%, #6c9cba 38%, #5590c8 40%, #74aadf 43%, #74aadf 54%, #5386bb 56%, #4a80b8 57%, #79ade0 59%, #5a90c4 61%, #4d80b4 63%, #78aee2 65%, #74aade 71%, #4278b2 73%, #4076b0 81%, #5f98d4 82%, #4a7fae 84%, #6fa8df 88%, #a4c8ea 92%, #b8d3ec 100%);
`;

const Title = styled.h1`
  flex: 1;
  margin: 0 0 0 8px;
  font-size: 19px;
  font-weight: 400;
  line-height: 26px;
  color: #24303c;
`;

const WindowButtons = styled.div`
  align-self: flex-start;
  display: flex;
  height: 28px;
  margin-right: 4px;
  border: 1px solid #40566c;
  border-top: 0;
  border-radius: 0 0 6px 6px;
  overflow: hidden;
`;

const WindowButton = styled.button<{ $close?: boolean }>`
  ${bareButton}
  display: flex;
  align-items: center;
  justify-content: center;
  width: ${(p) => (p.$close ? 75 : 43)}px;
  border-right: ${(p) => (p.$close ? 0 : 1)}px solid #40566c;
  background: ${(p) => (p.$close
    ? 'linear-gradient(#e2a598, #d4614c 45%, #bb2f1c 50%, #d8604a)'
    : 'linear-gradient(#ccdae8, #b9cbde 45%, #92abc6 50%, #b4cbe2)')};
`;

const Bar = styled.div<{ $height: number }>`
  flex: none;
  display: flex;
  align-items: center;
  height: ${(p) => p.$height}px;
  padding-left: 4px;
  background: linear-gradient(90deg, #f0f0f0, #f6f5f7 50%, #fcfbfd 85%, #fefdfe);
`;

const Toolbar = styled.div`
  flex: none;
  display: flex;
  align-items: center;
  height: 100%;
  border-radius: 3px;
  background: linear-gradient(#fcfcfc, #f1f0f1);
`;

const MenuBar = styled.nav`
  display: flex;
  padding: 0 12px 0 3px;
`;

const MenuItem = styled.button`
  ${bareButton}
  padding: 0 12px;
  line-height: 24px;
`;

const Highlight = styled.span`
  position: absolute;
  z-index: 2;
  top: 4px;
  left: -10px;
  width: 56px;
  height: 31px;
  border: 5px solid #f79646;
  border-radius: 2px;
`;

const Main = styled.main`
  flex: 1;
  display: flex;
  min-height: 0;
`;

const Contents = styled.section`
  flex: none;
  display: flex;
  flex-direction: column;
  width: 482px;
  background: #f0f1f4;
`;

const ContentsHeader = styled.div`
  display: flex;
  align-items: center;
  height: 31px;
  padding: 0 2px 0 7px;
  background: linear-gradient(90deg, #c9d6e3, #d6e2ee);
`;

const ContentsTitle = styled.h2`
  flex: 1;
  margin: 0;
  font-size: 18px;
  font-weight: 400;
  line-height: 24px;
  color: #5d6873;
`;

const SmallButton = styled.button<{ $on?: boolean }>`
  ${bareButton}
  display: flex;
  align-items: center;
  justify-content: center;
  width: 26px;
  height: 24px;
  ${(p) => p.$on && css`
    border: 2px solid #77797d;
    border-radius: 4px;
    background: #e2e2e2;
  `}
`;

const ContentsTools = styled.div`
  display: flex;
  align-items: center;
  height: 41px;
  padding-left: 6px;
  background: linear-gradient(#fafbfc, #eff0f3);
`;

const Tree = styled.ul`
  flex: 1;
  margin: 0 2px 0 0;
  padding: 2px 0 0 37px;
  border: 1px solid #85878c;
  border-left-color: #c4c4c8;
  background: #ffffff;
  list-style: none;
`;

const TreeItem = styled.li`
  display: flex;
  align-items: center;
  gap: 4px;
`;

const TreeLabel = styled.span`
  padding: 0 4px;
  font-size: 17px;
  font-weight: 700;
  line-height: 27px;
  color: #f4faff;
  background: #3d93ee;
`;

const MapPane = styled.section`
  position: relative;
  flex: 1;
  display: grid;
  grid-template: minmax(0, 1fr) 26px / minmax(0, 1fr) 26px;
  margin-left: 8px;
  border-top: 2px solid #76777b;
  border-left: 2px solid #76777b;
  background: #f0eff1;
`;

const Canvas = styled.div`
  background: #fefefe;
`;

const ScrollColumn = styled.div`
  display: flex;
  flex-direction: column;
  align-items: center;
  padding: 12px 0 10px;
  gap: 9px;
  border-left: 1px solid #dedde0;
  border-right: 1px solid #d8d8dc;
  background: #f3f2f4;
`;

const ThumbV = styled.div`
  flex: 1;
  width: 100%;
  display: flex;
  align-items: center;
  justify-content: center;
  border: 1px solid #a9a9ad;
  border-left-color: #dcdce0;
  border-radius: 2px;
  background: linear-gradient(90deg, #f6f6f7, #e6e6e8 45%, #c4c4c7 60%, #cfcfd2 85%, #9d9da2);
`;

const ScrollRow = styled.div`
  display: flex;
  align-items: center;
  gap: 1px;
  padding-right: 12px;
  border-top: 1px solid #dedde0;
`;

const ThumbH = styled.div`
  flex: 1;
  display: flex;
  align-items: center;
  justify-content: center;
  height: 24px;
  margin: 0 14px 0 2px;
  border: 1px solid #a3a3a8;
  border-top-color: #e4e4e6;
  border-radius: 2px;
  background: linear-gradient(#f4f4f5, #e4e4e6 45%, #c6c6c9 60%, #bcbcc0);
`;

const ThumbLines = styled.span<{ $vertical?: boolean }>`
  width: ${(p) => (p.$vertical ? 10 : 12)}px;
  height: ${(p) => (p.$vertical ? 12 : 10)}px;
  background: repeating-linear-gradient(${(p) => (p.$vertical ? '180deg' : '90deg')}, #5c5c60 0 2px, transparent 2px 5px);
`;

const Callout = styled.div`
  position: absolute;
  top: 190px;
  left: 452px;
  display: flex;
  align-items: center;
  width: 484px;
  height: 140px;
  padding-left: 17px;
  border: 5px solid #f79646;
  border-radius: 2px;
  background: #fdfffe;
  color: #000000;
  font-family: Lato, sans-serif;
  font-size: 48px;
  line-height: 56px;
  white-space: nowrap;
`;

const Pointer = styled.svg`
  position: absolute;
  z-index: 3;
  top: -50px;
  left: 452px;
  width: 184px;
  height: 226px;
  pointer-events: none;
`;

const SideTabs = styled.aside`
  flex: none;
  width: 38px;
  padding: 3px 0 0 7px;
  background: #fdfcfe;
`;

const SideTab = styled.button`
  ${bareButton}
  display: flex;
  flex-direction: column;
  align-items: center;
  gap: 5px;
  width: 31px;
  height: 106px;
  padding-top: 7px;
  border: 1px solid #a9a9ad;
  border-right: 0;
  border-radius: 6px 0 0 6px;
  color: #66666a;
  span {
    font-family: 'Liberation Sans', Arial, sans-serif;
    font-size: 19px;
    line-height: 22px;
    writing-mode: vertical-rl;
  }
`;

const Rail = styled.aside`
  flex: none;
  align-self: flex-start;
  display: flex;
  flex-direction: column;
  align-items: center;
  width: 57px;
  padding-top: 13px;
  background: #f9f8fa;
`;

const RailGrip = styled.span`
  width: 44px;
  height: 8px;
  background: radial-gradient(circle at center, #b4b4b4 1px, transparent 2px) center / 6px 6px repeat-x;
`;

const RailLine = styled.span`
  width: 40px;
  height: 10px;
  background: linear-gradient(#a9a9ac, #a9a9ac) center / 100% 1px no-repeat;
`;

const RailRow = styled.div`
  display: flex;
  margin-left: 2px;
`;

const RailMore = styled.button`
  ${bareButton}
  align-self: stretch;
  display: flex;
  align-items: center;
  justify-content: flex-end;
  gap: 2px;
  height: 18px;
  margin-top: 4px;
  padding-right: 5px;
  background: linear-gradient(90deg, #f4f4f4, #adadb0);
  &::before {
    content: '';
    width: 2px;
    height: 10px;
    background: #1c1c1c;
  }
`;

const BottomBar = styled(Bar)`
  padding-left: 381px;
`;

const StatusBar = styled.footer`
  flex: none;
  height: 22px;
  padding: 3px 132px 0 0;
  background: #efeff0;
  font-size: 17px;
  line-height: 26px;
  text-align: right;
  white-space: pre;
`;

const menus = ['File', 'Edit', 'View', 'Bookmarks', 'Insert', 'Selection', 'Geoprocessing', 'Customize', 'Windows', 'Help'];

const railGroups = [
  ['zoomIn', 'zoomOut', 'hand', 'globe'],
  ['shrink', 'grow'],
  ['back', 'forward'],
  ['selFeat', 'clearSel'],
  ['cursor'],
  ['info', 'flash', 'popup'],
  ['measure'],
  ['binoc', 'route', 'target'],
  ['time'],
  ['viewer'],
];

export default function App() {
  return (
    <>
      <GlobalStyle />
      <Page>
        <TitleBar>
          <Icon name="app" />
          <Title>Untitled - ArcMap - ArcView</Title>
          <WindowButtons>
            <WindowButton type="button" aria-label="Minimize">
              <svg width="20" height="10"><rect x="1" y="2" width="18" height="6" fill="#fff" stroke="#4c5c70" /></svg>
            </WindowButton>
            <WindowButton type="button" aria-label="Restore">
              <svg width="20" height="20" fill="#fff" stroke="#4c5c70">
                <rect x="6" y="1" width="13" height="13" />
                <rect x="1" y="5" width="13" height="14" />
                <rect x="5" y="9" width="5" height="6" fill="#9fb4cc" />
              </svg>
            </WindowButton>
            <WindowButton type="button" aria-label="Close" $close>
              <svg width="18" height="16">
                <path d="M3 2l12 12M15 2 3 14" stroke="#6c2a24" strokeWidth="6" />
                <path d="M3 2l12 12M15 2 3 14" stroke="#fff" strokeWidth="4" />
              </svg>
            </WindowButton>
          </WindowButtons>
        </TitleBar>

        <Bar $height={40}>
          <MenuBar aria-label="Main menu">
            {menus.map((m) => <MenuItem key={m} type="button">{m}</MenuItem>)}
          </MenuBar>
          <Toolbar>
            <Grip />
            <TextMenuButton type="button">Editor<Triangle /></TextMenuButton>
            <Tools items={['|', 'play', 'playA', '|', 'line', 'arc', 'trace', 'v', 'spark', '|', 'ed1', 'ed2', 'ed3', 'ed4', 'ed5', '|', 'sheet', 'chart', '|', 'form']} />
            <Overflow />
          </Toolbar>
          <Toolbar>
            <Grip />
            <Tools items={['sn1', 'sn2', 'sn3', 'sn4', 'sn5', '|', 'sn6', 'sphere', 'sn7', 'sn8']} />
            <Overflow gap={0} />
          </Toolbar>
        </Bar>

        <Bar $height={41}>
          <Toolbar>
            <Grip />
            <Tools items={['newDoc', 'open', 'save', 'print', '|', 'cut', 'copy', 'paste', 'del', '|', 'undo', 'redo', '|', 'add', 'V', '|']} />
            <Combo id="scale" label="Map scale" width={233} white />
            <Separator />
            <ToolButton type="button" aria-label="Editor toolbar" $on><Icon name="sketch" /></ToolButton>
            <Tools items={['|', 'winTable', 'winCatalog', 'winSearch', 'winToolbox', 'winPython', '|']} />
            <ToolButton type="button" aria-label="Model Builder">
              <Icon name="model" />
              <Highlight />
            </ToolButton>
            <Tools items={['|', 'help']} />
            <Overflow />
          </Toolbar>
          <Toolbar>
            <Grip />
            <Tools items={['globeGray']} />
            <Overflow gap={0} />
          </Toolbar>
        </Bar>

        <Bar $height={43}>
          <Toolbar>
            <Grip />
            <TextMenuButton type="button">Labeling<Triangle /></TextMenuButton>
            <Tools items={['lab1', 'lab2', 'lab3', 'lab4', 'lab5', 'lab6', '|']} />
            <Combo id="quality" label="Label quality" width={103} value="Fast" />
            <Overflow gap={18} />
          </Toolbar>
          <Toolbar>
            <Grip />
            <FieldLabel htmlFor="topology">Topology:</FieldLabel>
            <Combo id="topology" width={246} />
            <Tools items={['tp1', '|', 'tp2', '|', 'tp3', 'tp4', 'tp5', '|', 'tp6', 'tp7', 'tp8', '|', 'tp9', 'tp10', '|', 'tp11', 'tp12']} />
            <Overflow gap={0} />
          </Toolbar>
        </Bar>

        <Main>
          <Contents>
            <ContentsHeader>
              <ContentsTitle>Table Of Contents</ContentsTitle>
              <SmallButton type="button" aria-label="Auto hide"><Icon name="pin" size={18} /></SmallButton>
              <SmallButton type="button" aria-label="Close panel"><Icon name="close" size={15} /></SmallButton>
            </ContentsHeader>
            <ContentsTools>
              <Tools items={['tocTree']} />
              <ToolButton type="button" aria-label="List by source" $on><Icon name="tocSource" /></ToolButton>
              <Tools items={['tocVisible', 'tocSelect', '|', 'tocOptions']} />
            </ContentsTools>
            <Tree>
              <TreeItem>
                <Icon name="layers" />
                <TreeLabel>Layers</TreeLabel>
              </TreeItem>
            </Tree>
          </Contents>

          <MapPane>
            <Canvas />
            <ScrollColumn>
              <Triangle $dir="up" $color="#4a4a4e" />
              <ThumbV><ThumbLines $vertical /></ThumbV>
              <Triangle $color="#4a4a4e" />
            </ScrollColumn>
            <ScrollRow>
              <SmallButton type="button" aria-label="Data view" $on><Icon name="dataView" size={18} /></SmallButton>
              <SmallButton type="button" aria-label="Layout view"><Icon name="layoutView" size={18} /></SmallButton>
              <Separator />
              <SmallButton type="button" aria-label="Refresh"><Icon name="refresh" size={16} /></SmallButton>
              <SmallButton type="button" aria-label="Pause drawing"><Icon name="pause" size={16} /></SmallButton>
              <SmallButton type="button" aria-label="Scroll left"><Triangle $dir="left" $color="#4a4a4e" /></SmallButton>
              <ThumbH><ThumbLines /></ThumbH>
              <Triangle $dir="right" $color="#4a4a4e" />
            </ScrollRow>
            <Callout>Model Builder Icon</Callout>
            <Pointer viewBox="0 0 184 226" fill="none" stroke="#be4b48" strokeWidth="2">
              <path d="M3 2 180 223M160 214l20 9-3-22" />
            </Pointer>
          </MapPane>

          <SideTabs>
            <SideTab type="button">
              <Icon name="winSearch" size={24} />
              <span>Search</span>
            </SideTab>
          </SideTabs>

          <Rail>
            <RailGrip />
            {railGroups.map((group, gi) => (
              <React.Fragment key={gi}>
                {gi > 0 && <RailLine />}
                {group.map((name) =>
                  name === 'selFeat' ? (
                    <RailRow key={name}><Tools items={['selFeat', 'v']} /></RailRow>
                  ) : (
                    <ToolButton key={name} type="button" aria-label={name}>
                      <Icon name={name} size={name === 'shrink' || name === 'grow' ? 24 : 26} />
                    </ToolButton>
                  ),
                )}
              </React.Fragment>
            ))}
            <RailMore type="button" aria-label="More tools"><Triangle $dir="right" /></RailMore>
          </Rail>
        </Main>

        <BottomBar $height={44}>
          <Toolbar>
            <Grip />
            <TextMenuButton type="button" $compact>Georeferencing<Triangle /></TextMenuButton>
            <Separator />
            <FieldLabel htmlFor="layer" $compact>Layer:</FieldLabel>
            <Combo id="layer" width={310} />
            <Tools items={['rotate', 'v', 'control', 'linkTable', 'hammer']} />
            <Overflow gap={0} />
          </Toolbar>
        </BottomBar>
        <StatusBar>113.971  879.902 Unknown Units</StatusBar>
      </Page>
    </>
  );
}
